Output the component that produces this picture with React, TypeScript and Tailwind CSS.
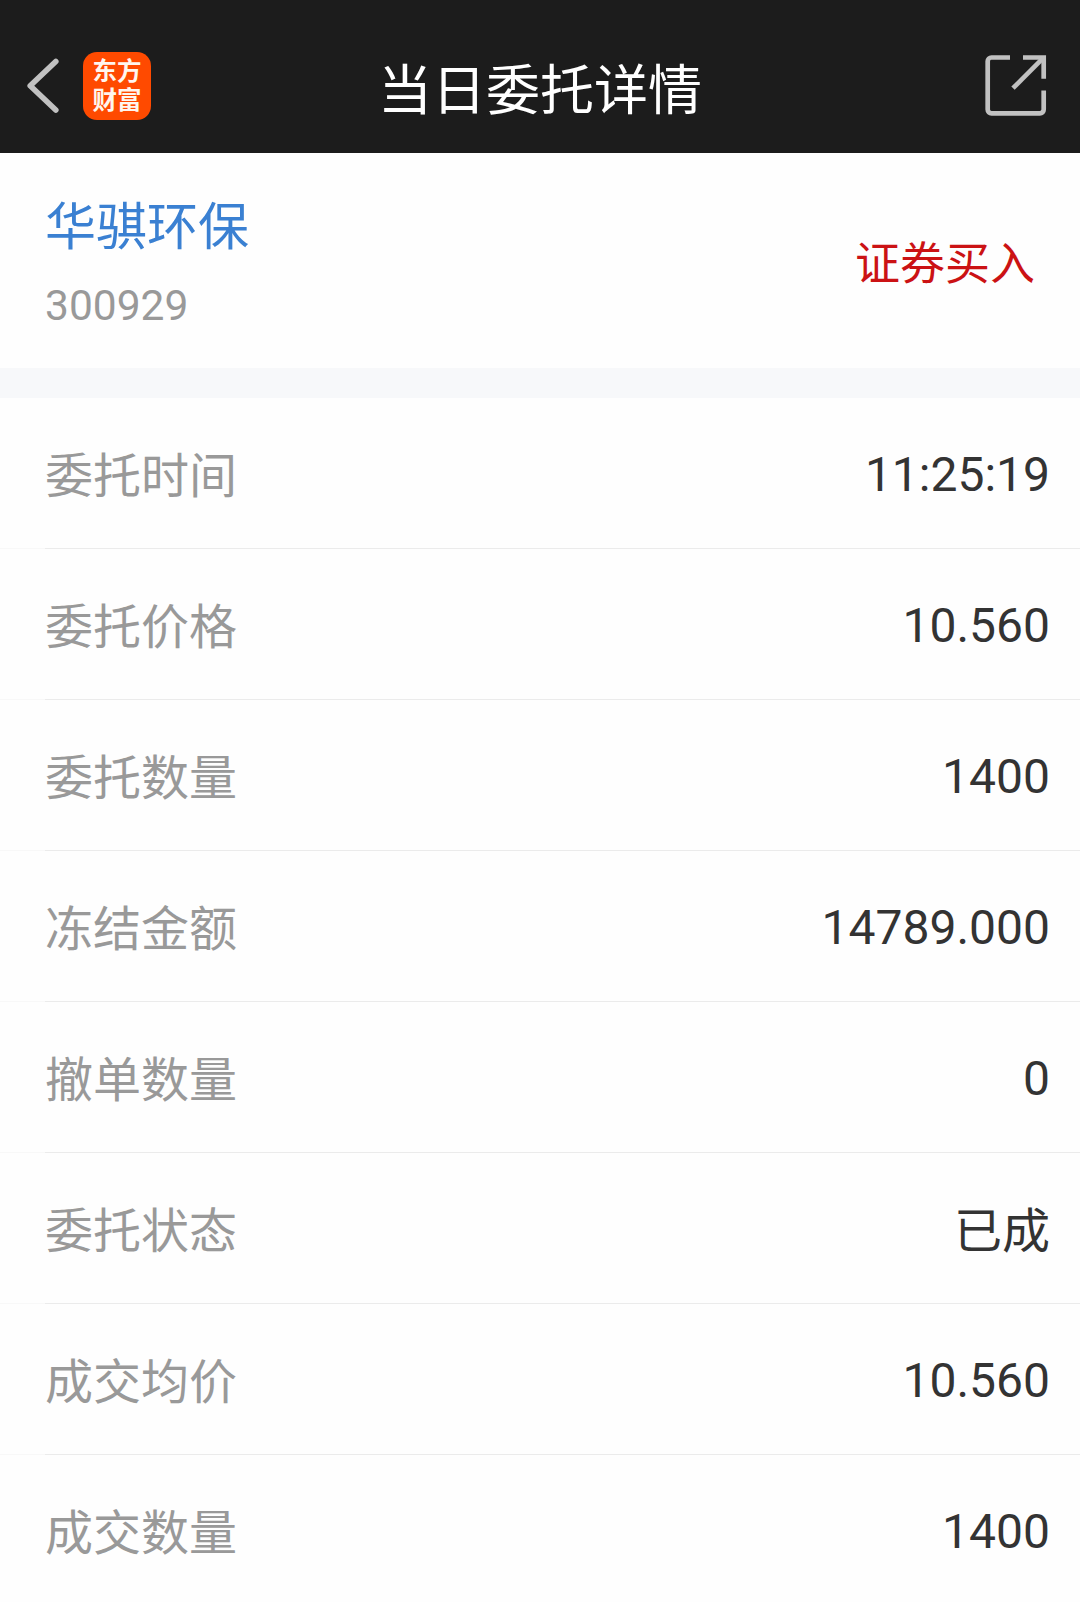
const rows = [
  { label: '委托时间', value: '11:25:19' },
  { label: '委托价格', value: '10.560' },
  { label: '委托数量', value: '1400' },
  { label: '冻结金额', value: '14789.000' },
  { label: '撤单数量', value: '0' },
  { label: '委托状态', value: '已成', cjk: true },
  { label: '成交均价', value: '10.560' },
  { label: '成交数量', value: '1400' },
];

function BackIcon() {
  return (
    <svg width="34" height="56" viewBox="0 0 34 56" fill="none" stroke="#c1c1c1" strokeWidth="5.6" strokeLinejoin="round" strokeLinecap="round">
      <path d="M29.8 3.5 4.2 27.8 29.8 52" />
    </svg>
  );
}

function ShareIcon() {
  return (
    <svg width="62" height="62" viewBox="0 0 62 62" fill="none" stroke="#c1c1c1" strokeWidth="4.7">
      <path d="M25 2.5H6.5A3.8 3.8 0 0 0 2.7 6.3V54.6A3.8 3.8 0 0 0 6.5 58.4H54.9A3.8 3.8 0 0 0 58.7 54.6V35.5" />
      <path d="M38 2.5H58.7V23.8" />
      <path d="M58 3.2 28 33.2" />
    </svg>
  );
}

function Header() {
  return (
    <header className="grid h-[153px] grid-cols-3 items-center bg-[#1c1c1c] pt-[18px]">
      <div className="flex items-center gap-[23px] pl-[26px]">
        <BackIcon />
        <div className="flex h-[68px] w-[68px] flex-col items-center justify-center rounded-[14px] bg-[#ff4a00] text-[24.5px] leading-[29px] font-bold text-[#fff6ee]">
          <span>东方</span>
          <span>财富</span>
        </div>
      </div>
      <h1 className="pt-[12px] text-center text-[54px] leading-[60px] whitespace-nowrap text-white">当日委托详情</h1>
      <div className="flex justify-end pr-[33px]">
        <ShareIcon />
      </div>
    </header>
  );
}

export default function App() {
  return (
    <div className="h-[1602px] w-[1080px] overflow-hidden bg-[#fefefe] font-[Roboto,'Noto_Sans_CJK_SC',sans-serif]">
      <Header />
      <section className="flex h-[215px] items-center justify-between pr-[45px] pl-[45px]">
        <div className="pt-[6px]">
          <div className="text-[51px] leading-[72px] text-[#3a80d2]">华骐环保</div>
          <div className="mt-[12px] text-[42.5px] leading-[60px] text-[#999999]">300929</div>
        </div>
        <div className="pt-[9px] text-[45px] leading-[60px] text-[#cb1214]">证券买入</div>
      </section>
      <div className="h-[30px] bg-[#f7f8fa]" />
      <main>
        {rows.map((row) => (
          <div key={row.label} className="h-[151px]">
            <div className="flex h-[150px] items-center justify-between pr-[30px] pl-[45px] text-[48px] leading-[60px]">
              <span className="pt-[7px] text-[#999999]">{row.label}</span>
              <span className={row.cjk ? 'pt-[7px] text-[#333333]' : 'pt-[4px] text-[#333333]'}>{row.value}</span>
            </div>
            <div className="flex h-px">
              <div className="w-[45px] bg-[#f8f8f8]" />
              <div className="flex-1 bg-[#ebebeb]" />
            </div>
          </div>
        ))}
      </main>
    </div>
  );
}
